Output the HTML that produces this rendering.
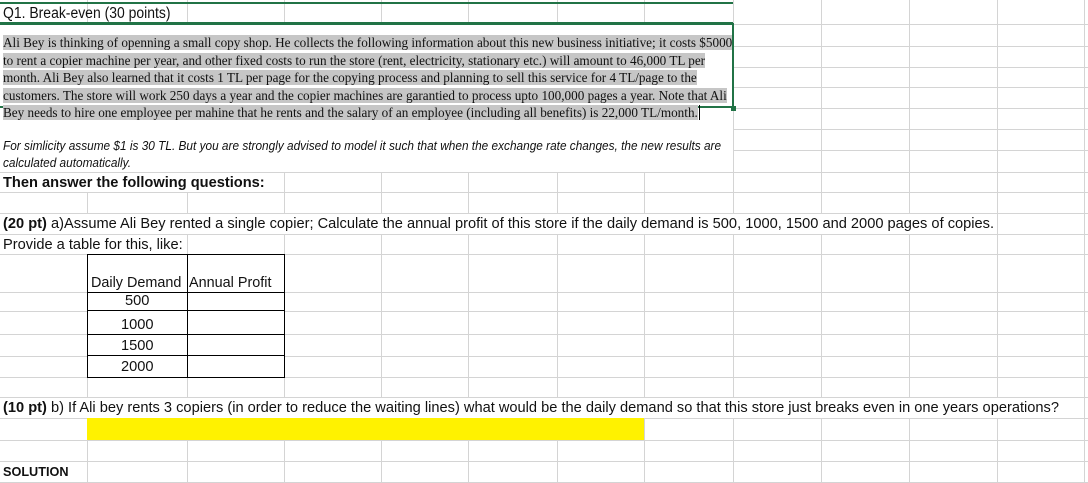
<!DOCTYPE html>
<html><head><meta charset="utf-8"><style>
body{margin:0;width:1088px;height:483px;overflow:hidden;background:#fff;position:relative;font-family:"Liberation Sans",sans-serif;}
.v{position:absolute;width:1px;background:#d4d4d4;top:0;height:483px}
.h{position:absolute;height:1px;background:#d4d4d4;left:0;width:1088px}
.w{position:absolute;background:#fff}
.t{position:absolute;white-space:nowrap;color:#111;transform-origin:0 50%;}
.c{font-size:15px;transform:scaleX(0.975);}
.blk{position:absolute;left:3px;top:34px;font-family:"Liberation Serif",serif;font-size:13.2px;line-height:17.5px;color:#111}
.blk span{background:#c6c6c6;white-space:nowrap}
.tb{position:absolute;border:1px solid #000;background:#fff}
</style></head><body>
<div id="g"></div>
<script>
var g=document.getElementById('g'),s='';
[87,187,284,381,468,557,644,733,821,909,997,1084].forEach(function(x){s+='<div class="v" style="left:'+x+'px"></div>'});
[24,46,67,87,108,129,150,172,192,213,234,254,292,311,334,356,377,397,418,440,461,482].forEach(function(y){s+='<div class="h" style="top:'+y+'px"></div>'});
g.innerHTML=s;
</script>
<div class="w" style="left:0;top:25px;width:733px;height:147px"></div>
<div class="w" style="left:0;top:173px;width:284px;height:19px"></div>
<div class="w" style="left:0;top:214px;width:996px;height:20px"></div>
<div class="w" style="left:0;top:235px;width:187px;height:19px"></div>
<div class="w" style="left:0;top:398px;width:1083px;height:20px"></div>
<div class="w" style="left:0;top:255px;width:86px;height:37px"></div>
<div style="position:absolute;left:0;top:2px;width:733px;height:2px;background:#217346"></div>
<div style="position:absolute;left:0;top:22px;width:733px;height:2px;background:#217346"></div>
<div style="position:absolute;left:0;top:23px;width:734px;height:85px;border:2px solid #217346;border-left:none;box-sizing:border-box"></div>
<div style="position:absolute;left:731px;top:106px;width:5px;height:5px;background:#217346"></div>
<div class="t c" style="left:3px;top:5px;font-size:15.5px;line-height:18px;transform:scaleX(0.9)">Q1. Break-even (30 points)</div>
<div class="blk">
<span>Ali Bey is thinking of openning a small copy shop. He collects the following information about this new business initiative; it costs $5000</span><br>
<span>to rent a copier machine per year, and other fixed costs to run the store (rent, electricity, stationary etc.) will amount to 46,000 TL per</span><br>
<span>month. Ali Bey also learned that it costs 1 TL per page for the copying process and planning to sell this service for 4 TL/page to the</span><br>
<span>customers. The store will work 250 days a year and the copier machines are garantied to process upto 100,000 pages a year. Note that Ali</span><br>
<span>Bey needs to hire one employee per mahine that he rents and the salary of an employee (including all benefits) is 22,000 TL/month.</span><span style="background:none;border-left:1px solid #000;margin-left:1px"></span>
</div>
<div class="t c" style="left:3px;top:138px;font-size:13px;line-height:16px;font-style:italic;transform:scaleX(0.91)">For simlicity assume $1 is 30 TL. But you are strongly advised to model it such that when the exchange rate changes, the new results are</div>
<div class="t c" style="left:3px;top:155px;font-size:13px;line-height:16px;font-style:italic;transform:scaleX(0.91)">calculated automatically.</div>
<div class="t c" style="left:3px;top:174px;font-weight:bold;line-height:18px">Then answer the following questions:</div>
<div class="t c" style="left:3px;top:215px;line-height:18px"><b>(20 pt)</b> a)Assume Ali Bey rented a single copier; Calculate the annual profit of this store if the daily demand is 500, 1000, 1500 and 2000 pages of copies.</div>
<div class="t c" style="left:3px;top:236px;line-height:18px">Provide a table for this, like:</div>
<div class="tb" style="left:87px;top:254px;width:196px;height:122px"></div>
<div style="position:absolute;left:187px;top:254px;width:1px;height:123px;background:#000"></div>
<div style="position:absolute;left:87px;top:292px;width:197px;height:1px;background:#000"></div>
<div style="position:absolute;left:87px;top:310px;width:197px;height:1px;background:#000"></div>
<div style="position:absolute;left:87px;top:334px;width:197px;height:1px;background:#000"></div>
<div style="position:absolute;left:87px;top:355px;width:197px;height:1px;background:#000"></div>
<div class="t c" style="left:91px;top:274px;line-height:18px;transform:scaleX(0.96)">Daily Demand</div>
<div class="t c" style="left:189px;top:274px;line-height:18px;transform:scaleX(0.96)">Annual Profit</div>
<div class="t c" style="left:125px;top:292px;line-height:18px">500</div>
<div class="t c" style="left:121px;top:316px;line-height:18px">1000</div>
<div class="t c" style="left:121px;top:337px;line-height:18px">1500</div>
<div class="t c" style="left:121px;top:358px;line-height:18px">2000</div>
<div class="t c" style="left:3px;top:399px;line-height:18px"><b>(10 pt)</b> b) If Ali bey rents 3 copiers (in order to reduce the waiting lines) what would be the daily demand so that this store just breaks even in one years operations?</div>
<div style="position:absolute;left:87px;top:418px;width:557px;height:22px;background:#fff200"></div>
<div class="t c" style="left:3px;top:463px;font-weight:bold;font-size:13px;line-height:18px">SOLUTION</div>
</body></html>
